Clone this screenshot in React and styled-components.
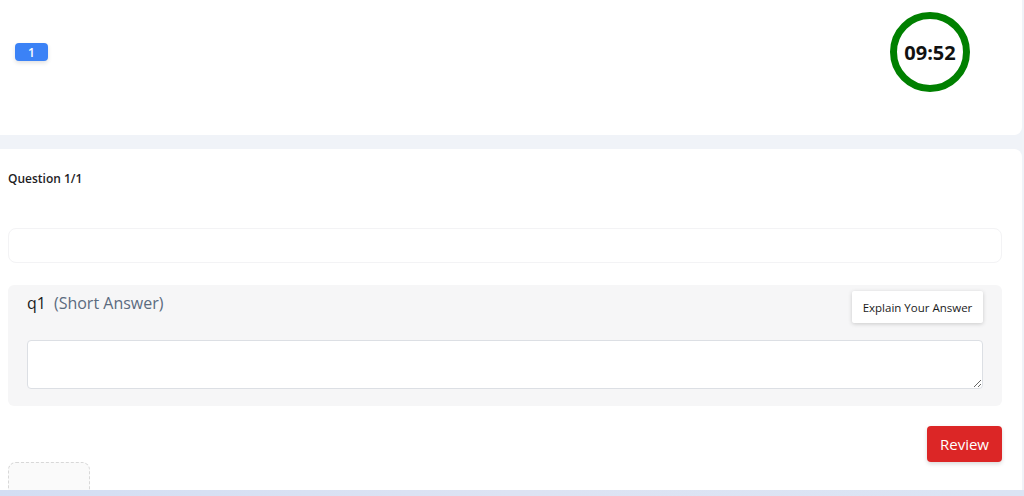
import React from 'react';
import styled, {createGlobalStyle} from 'styled-components';

const GlobalStyle = createGlobalStyle`
    body {
        margin: 0;
        background: #f0f3f8;
        font-family: "Open Sans", "Noto Sans", sans-serif;
        color: #1f2328;
    }
    * {
        box-sizing: border-box;
    }
`;

export default function App() {
    return (
        <>
            <GlobalStyle />
            <Page>
                <HeaderCard>
                    <QuestionNav>
                        <NavBadge>1</NavBadge>
                    </QuestionNav>
                    <Timer>09:52</Timer>
                </HeaderCard>

                <QuestionCard>
                    <Title>Question 1/1</Title>
                    <EmptyBlock />

                    <QuestionBox>
                        <QuestionHeader>
                            <QuestionLabel>
                                q1<QuestionType>(Short Answer)</QuestionType>
                            </QuestionLabel>
                            <ExplainButton>Explain Your Answer</ExplainButton>
                        </QuestionHeader>
                        <AnswerInput />
                    </QuestionBox>

                    <Actions>
                        <ReviewButton>Review</ReviewButton>
                    </Actions>

                    <UploadBox />
                </QuestionCard>
            </Page>
            <FooterStrip />
        </>
    );
}

const Page = styled.div`
    padding-right: 2px;
`;

const HeaderCard = styled.div`
    height: 135px;
    background: #fff;
    border-radius: 0 0 8px 0;
    display: flex;
    align-items: flex-start;
    justify-content: space-between;
    padding: 12px 52px 0 15px;
`;

const QuestionNav = styled.div`
    height: 80px;
    display: flex;
    align-items: center;
`;

const NavBadge = styled.button`
    width: 33px;
    height: 18px;
    border: none;
    border-radius: 4px;
    background: #3b82f6;
    color: #fff;
    font-family: "Open Sans", sans-serif;
    font-size: 12px;
    font-weight: 600;
    padding: 0;
    box-shadow: 0 2px 4px rgba(0, 0, 0, 0.12);
`;

const Timer = styled.div`
    width: 80px;
    height: 80px;
    border-radius: 50%;
    border: 7px solid #008000;
    display: flex;
    align-items: center;
    justify-content: center;
    font-size: 20px;
    font-weight: 700;
    color: #111;
`;

const QuestionCard = styled.div`
    margin-top: 14px;
    background: #fff;
    border-radius: 0 8px 0 0;
    padding: 20px 20px 20px 8px;
`;

const Title = styled.div`
    font-size: 12px;
    font-weight: 600;
    line-height: 20px;
    color: #1d1d1f;
`;

const EmptyBlock = styled.div`
    margin-top: 39px;
    height: 35px;
    border: 1px solid #f3f3f5;
    border-radius: 8px;
`;

const QuestionBox = styled.div`
    margin-top: 22px;
    background: #f6f6f7;
    border-radius: 6px;
    padding: 6px 19px 17px 19px;
`;

const QuestionHeader = styled.div`
    display: flex;
    align-items: flex-start;
    justify-content: space-between;
`;

const QuestionLabel = styled.div`
    font-size: 16px;
    line-height: 24px;
    font-weight: 500;
    color: #1a1a1a;
`;

const QuestionType = styled.span`
    margin-left: 8px;
    color: #5b6b7f;
    font-weight: 500;
`;

const ExplainButton = styled.button`
    height: 32px;
    width: 131px;
    border: none;
    border-radius: 2px;
    background: #fff;
    box-shadow: 0 1px 4px rgba(0, 0, 0, 0.18);
    font-family: "Open Sans", sans-serif;
    font-size: 11.5px;
    font-weight: 500;
    color: #1a1a1a;
    padding: 0;
`;

const AnswerInput = styled.textarea`
    display: block;
    width: 100%;
    height: 49px;
    margin-top: 17px;
    border: 1px solid #dcdfe4;
    border-radius: 4px;
    background: #fff;
    resize: vertical;
`;

const Actions = styled.div`
    display: flex;
    justify-content: flex-end;
    margin-top: 20px;
`;

const ReviewButton = styled.button`
    width: 75px;
    height: 36px;
    border: none;
    border-radius: 4px;
    background: #dc2626;
    color: #fff;
    font-family: "Open Sans", sans-serif;
    font-size: 15px;
    padding: 0;
    box-shadow: 0 2px 4px rgba(0, 0, 0, 0.15);
`;

const UploadBox = styled.div`
    width: 82px;
    height: 80px;
    border: 1px dashed #d8d8d8;
    border-radius: 8px;
    background: #fafafa;
`;

const FooterStrip = styled.div`
    position: fixed;
    left: 0;
    right: 0;
    bottom: 0;
    height: 6px;
    background: linear-gradient(90deg, #d3def3 0%, #dde3f3 50%, #dbe4f4 100%);
`;
